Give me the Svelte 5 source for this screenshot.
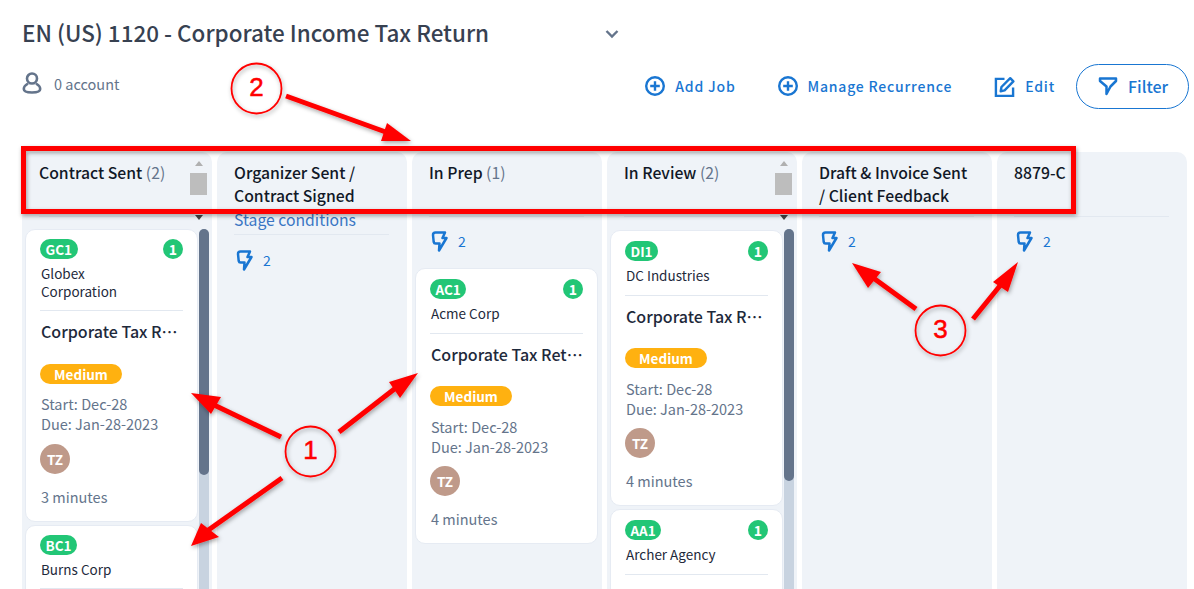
<script lang="ts">
  const job = 'Corporate Tax Return Preparation';

  const columns = [
    { title: 'Contract Sent', count: 2, scroll: 246, tight: true, cards: [
      { code: 'GC1', company: 'Globex Corporation', age: '3 minutes', num: true },
      { code: 'BC1', company: 'Burns Corp', age: '3 minutes' }
    ] },
    { title: 'Organizer Sent / Contract Signed', stage: true, bolts: 2, cards: [] },
    { title: 'In Prep', count: 1, bolts: 2, cards: [
      { code: 'AC1', company: 'Acme Corp', age: '4 minutes', num: true }
    ] },
    { title: 'In Review', count: 2, scroll: 252, inset: true, cards: [
      { code: 'DI1', company: 'DC Industries', age: '4 minutes', num: true },
      { code: 'AA1', company: 'Archer Agency', age: '4 minutes', num: true }
    ] },
    { title: 'Draft & Invoice Sent / Client Feedback', bolts: 2, cards: [] },
    { title: '8879-C', bolts: 2, cards: [] }
  ];

  // annotation arrows: tail, tip and the two back corners of the head
  const arrows = [
    { tail: [286, 96], neck: [394, 135], head: '411,141 387,123 381,141' },
    { tail: [281, 437], neck: [212, 404], head: '191,393 221,397 211,414' },
    { tail: [339, 432], neck: [397, 387], head: '418,373 389,382 400,398' },
    { tail: [282, 478], neck: [207, 531], head: '191,546 201,523 219,537' },
    { tail: [916, 309], neck: [872, 277], head: '852,263 881,272 868,288' },
    { tail: [973, 319], neck: [1003, 282], head: '1018,262 993,282 1008,292' }
  ];

  const marks = [
    { n: 2, x: 256.5, y: 88.5 },
    { n: 1, x: 310.5, y: 451.5 },
    { n: 3, x: 940.5, y: 330.5 }
  ];
</script>

{#snippet bolt()}
  <svg viewBox="0 0 17 21" width="17" height="21" fill="none" stroke="#1976d2" stroke-width="2.500" stroke-linejoin="round" stroke-linecap="round">
    <path d="M4.500 1.500h9.500l-2.500 5.500h4L8 19.500l.5-7H4.500q-1.500 0-1.800-1.500L2 4q0-2.500 2.500-2.500z" />
  </svg>
{/snippet}

{#snippet plus()}
  <svg viewBox="0 0 20 20" width="20" height="20" fill="none" stroke="#1976d2" stroke-width="2.400">
    <circle cx="10" cy="10" r="8.800" /><path d="M10 5.200v9.600M5.200 10h9.600" />
  </svg>
{/snippet}

<div class="page">
  <div class="title-row">
    <h1>EN (US) 1120 - Corporate Income Tax Return</h1>
    <svg class="chevron" viewBox="0 0 14 10" width="14" height="10" fill="none" stroke="#64748b" stroke-width="2.400"><path d="M1.500 2l5.500 5.500L12.500 2" /></svg>
  </div>

  <div class="meta-row">
    <div class="accounts">
      <svg viewBox="0 0 20 22" width="20" height="22" fill="none" stroke="#64748b" stroke-width="2.600">
        <circle cx="10" cy="6.500" r="5" /><path d="M6 11.500C3.500 13 1.800 15 1.800 17c0 2.200 2.500 3.500 8.200 3.500s8.200-1.300 8.200-3.500c0-2-1.700-4-4.200-5.500" />
      </svg>
      <span>0 account</span>
    </div>
    <div class="actions">
      <button class="action add">{@render plus()}<span>Add Job</span></button>
      <button class="action manage">{@render plus()}<span>Manage Recurrence</span></button>
      <button class="action edit">
        <svg viewBox="0 0 22 22" width="21" height="21" fill="none" stroke="#1976d2" stroke-width="2.500">
          <path d="M11 3H2v18h18v-9" /><path d="M7 16l.8-4.500L17 2.300l3.300 3.300-9.200 9.500z" stroke-linejoin="round" />
        </svg>
        <span>Edit</span>
      </button>
      <button class="filter">
        <svg viewBox="0 0 20 20" width="20" height="20" fill="none" stroke="#1976d2" stroke-width="2.500" stroke-linejoin="round"><path d="M2 2.500h16v2.500l-5.500 5.500-4 7.500v-7.500L2 5z" /></svg>
        <span>Filter</span>
      </button>
    </div>
  </div>

  <div class="board">
    {#each columns as col}
      <section class="column" class:stage={col.stage} class:scrolls={col.scroll} class:tight={col.tight} class:inset={col.inset}>
        <header>
          <h2>{col.title}{#if col.count}{' '}<em>({col.count})</em>{/if}</h2>
          {#if col.scroll}
            <div class="head-scroll"><i class="up"></i><b></b><i class="down"></i></div>
          {/if}
        </header>
        {#if col.stage}
          <a class="stage-link" href="#stage">Stage conditions</a>
        {/if}
        {#if col.bolts}
          <div class="bolts">{@render bolt()}<span>{col.bolts}</span></div>
        {/if}
        <div class="body">
          <div class="cards">
            {#each col.cards as card}
              <article class="card">
                <div class="card-top">
                  <span class="code">{card.code}</span>
                  {#if card.num}<span class="num">1</span>{/if}
                </div>
                <p class="company"><span>{card.company}</span></p>
                <h3>{job}</h3>
                <span class="priority">Medium</span>
                <p class="dates">Start: Dec-28<br />Due: Jan-28-2023</p>
                <span class="avatar">TZ</span>
                <p class="age">{card.age}</p>
              </article>
            {/each}
          </div>
          {#if col.scroll}
            <div class="track"><div class="thumb" style="height: {col.scroll}px"></div></div>
          {/if}
        </div>
      </section>
    {/each}
  </div>

  <svg class="notes" viewBox="0 0 1194 589" width="1194" height="589">
    <defs>
      <filter id="sh" x="-5%" y="-5%" width="110%" height="110%">
        <feDropShadow dx="1" dy="2" stdDeviation="2" flood-color="#000" flood-opacity=".35" />
      </filter>
    </defs>
    <g filter="url(#sh)">
      <rect x="23.500" y="148.500" width="1050" height="63" fill="none" stroke="#f00" stroke-width="5" />
      {#each arrows as a}
        <line x1={a.tail[0]} y1={a.tail[1]} x2={a.neck[0]} y2={a.neck[1]} stroke="#f00" stroke-width="5" />
        <polygon points={a.head} fill="#f00" />
      {/each}
      {#each marks as m}
        <circle cx={m.x} cy={m.y} r="25" fill="none" stroke="#f00" stroke-width="1.800" />
      {/each}
    </g>
    {#each marks as m}
      <text class="note-num" x={m.x} y={m.y + 7} fill="#f00" text-anchor="middle">{m.n}</text>
    {/each}
  </svg>
</div>

<style>
  :global(html), :global(body) {
    margin: 0;
    overflow: hidden;
  }

  .page {
    position: relative;
    width: 1194px;
    height: 589px;
    overflow: hidden;
    background: #fff;
    font-family: "Noto Sans CJK KR", "Noto Sans", sans-serif;
    color: #1e293b;
  }

  .title-row {
    display: flex;
    align-items: center;
    height: 34px;
    padding: 15px 0 0 22px;
  }

  h1 {
    margin: 0;
    width: 583px;
    font-size: 22.450px;
    line-height: 34px;
    font-weight: 500;
    color: #374151;
  }

  .chevron {
    margin-top: 4px;
  }

  .meta-row {
    display: flex;
    justify-content: space-between;
    align-items: center;
    height: 44px;
    padding: 15px 5px 0 22px;
  }

  .accounts {
    display: flex;
    align-items: center;
    gap: 12px;
    margin-top: -6px;
    font-size: 14.500px;
    color: #64748b;
  }

  .actions {
    display: flex;
    align-items: center;
  }

  button {
    display: flex;
    align-items: center;
    padding: 0;
    border: 0;
    background: none;
    font: inherit;
    color: #1976d2;
  }

  .action {
    gap: 10px;
    font-size: 14px;
    font-weight: 500;
    letter-spacing: .8px;
  }

  .add { margin-right: 42px; }
  .manage { margin-right: 42px; }
  .edit { margin-right: 21px; }

  .filter {
    box-sizing: border-box;
    gap: 10px;
    width: 113px;
    height: 45px;
    padding-left: 21px;
    border: 1px solid #1976d2;
    border-radius: 23px;
    font-size: 16px;
    font-weight: 500;
  }

  .board {
    display: flex;
    gap: 5px;
    width: 1165px;
    height: 437px;
    margin: 0 0 0 22px;
    position: absolute;
    top: 152px;
  }

  .column {
    display: flex;
    flex-direction: column;
    width: 190px;
    flex: none;
    background: #eff3f8;
    border-radius: 10px 10px 0 0;
    overflow: hidden;
  }

  .column:last-child {
    border-top-right-radius: 10px;
  }

  header {
    position: relative;
    box-sizing: border-box;
    height: 65px;
    margin: 0 18px 0 17px;
    padding-top: 9px;
    border-bottom: 1px solid #e2e8f0;
    flex: none;
  }

  .stage header {
    height: 58px;
    border-bottom: 0;
  }

  h2 {
    margin: 0;
    max-width: 154px;
    font-size: 15.750px;
    line-height: 23px;
    font-weight: 500;
    color: #111827;
  }

  h2 em {
    font-style: normal;
    font-weight: 400;
    color: #64748b;
  }

  .head-scroll {
    position: absolute;
    top: 0;
    right: -13px;
    bottom: -4px;
    width: 17px;
    display: flex;
    flex-direction: column;
    align-items: center;
  }

  .head-scroll b {
    width: 17px;
    height: 22px;
    margin-top: 7px;
    background: #bdbdbd;
  }

  .head-scroll i {
    width: 0;
    height: 0;
    border-left: 4px solid transparent;
    border-right: 4px solid transparent;
  }

  .head-scroll .up {
    margin-top: 9px;
    border-bottom: 5px solid #b0b0b0;
  }

  .head-scroll .down {
    margin-top: auto;
    border-top: 5px solid #444;
  }

  .stage-link {
    display: block;
    box-sizing: border-box;
    margin: 0 18px 0 17px;
    height: 25px;
    border-bottom: 1px solid #e2e8f0;
    font-size: 15.750px;
    line-height: 20px;
    color: #3a76c4;
    text-decoration: none;
  }

  .bolts {
    display: flex;
    align-items: center;
    gap: 10px;
    height: 26px;
    margin: 11px 0 14px 19px;
    font-size: 14px;
    color: #1976d2;
  }

  .stage .bolts {
    margin-top: 12px;
  }

  .body {
    display: flex;
    flex: 1;
    min-height: 0;
    padding-left: 3px;
  }

  .scrolls .body {
    margin-top: 12px;
  }

  .cards {
    flex: 1;
    display: flex;
    flex-direction: column;
    gap: 3px;
    min-width: 0;
  }

  .inset .cards {
    padding-top: 1px;
  }

  .column:not(.scrolls) .cards {
    margin-right: 4px;
  }

  .track {
    width: 10px;
    margin: 0 3px 0 1px;
    flex: none;
    background: #c8d3e0;
    border-radius: 5px 5px 0 0;
  }

  .thumb {
    background: #64748b;
    border-radius: 5px;
  }

  .card {
    box-sizing: border-box;
    flex: none;
    padding: 10px 14px 14px;
    background: #fff;
    border: 1px solid #e6ebf3;
    border-radius: 10px;
  }

  .tight .card {
    padding-top: 9px;
  }

  .card-top {
    display: flex;
    justify-content: space-between;
    align-items: center;
    height: 20px;
  }

  .code {
    padding: 0 5.500px;
    height: 20px;
    border-radius: 10px;
    background: #22c676;
    color: #fff;
    font-size: 13.500px;
    line-height: 20px;
    font-weight: 700;
  }

  .num {
    width: 20px;
    height: 20px;
    border-radius: 50%;
    background: #22c676;
    color: #fff;
    font-size: 14px;
    line-height: 20px;
    font-weight: 700;
    text-align: center;
  }

  .company {
    margin: 5px 0 0;
    padding-bottom: 11px;
    border-bottom: 1px solid #e2e8f0;
    font-size: 13.500px;
    line-height: 18px;
    color: #1e293b;
  }

  .tight .company {
    padding-bottom: 10px;
  }

  .company span {
    display: block;
    max-width: 110px;
    padding-left: 1px;
  }

  h3 {
    margin: 8px -1px 0 0;
    padding-left: 1px;
    height: 44px;
    font-size: 16px;
    line-height: 24px;
    font-weight: 500;
    white-space: nowrap;
    overflow: hidden;
    text-overflow: ellipsis;
  }

  .tight h3 {
    height: 45px;
  }

  .priority {
    display: block;
    width: 82px;
    height: 20px;
    border-radius: 10px;
    background: #ffb110;
    color: #fff;
    font-size: 13.500px;
    line-height: 20px;
    font-weight: 700;
    text-align: center;
  }

  .dates {
    margin: 11px 0 9px;
    padding-left: 1px;
    font-size: 14.500px;
    line-height: 20px;
    color: #64748b;
  }

  .tight .dates {
    margin: 10px 0 10px;
  }

  .avatar {
    display: block;
    width: 30px;
    height: 30px;
    border-radius: 50%;
    background: #bf9a8a;
    color: #fff;
    font-size: 13.500px;
    line-height: 30px;
    font-weight: 700;
    text-align: center;
  }

  .age {
    margin: 13px 0 0;
    padding-left: 1px;
    font-size: 14.500px;
    line-height: 20px;
    color: #64748b;
  }

  .notes {
    position: absolute;
    inset: 0;
    pointer-events: none;
  }

  .note-num {
    font-family: "Liberation Sans", sans-serif;
    font-size: 26px;
    stroke: #f00;
    stroke-width: .5px;
  }
</style>
